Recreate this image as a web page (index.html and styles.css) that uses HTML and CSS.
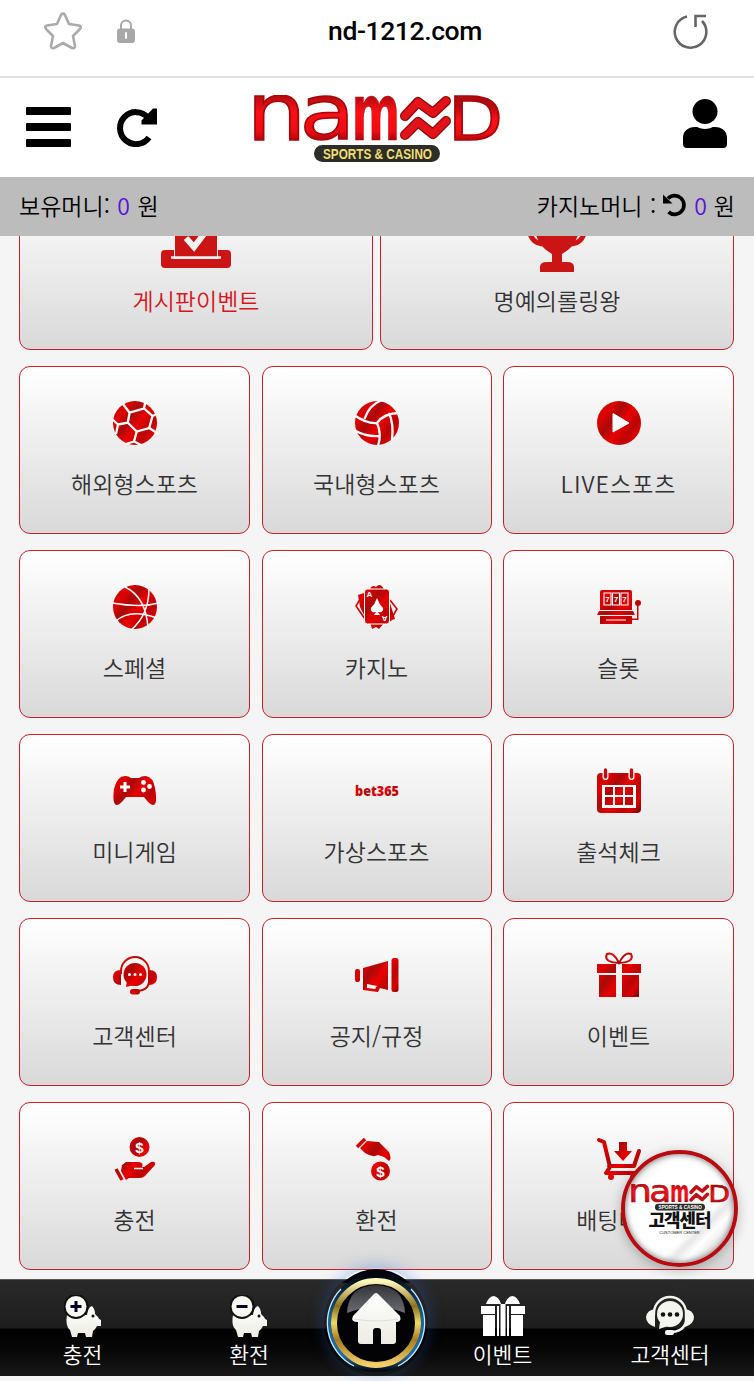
FILE: index.html
```html
<!DOCTYPE html>
<html lang="ko">
<head>
  <meta charset="UTF-8">
  <meta name="viewport" content="width=device-width, initial-scale=1">
  <title>NAMND</title>
  <link rel="stylesheet" href="styles.css">
</head>
<body>
  <!-- shared gradients -->
  <svg class="defs" width="0" height="0">
    <defs>
      <linearGradient id="red" gradientUnits="userSpaceOnUse" x1="0" y1="6" x2="44" y2="38">
        <stop offset="0" stop-color="#c00808"/>
        <stop offset=".2" stop-color="#e00000"/>
        <stop offset=".37" stop-color="#a80a0a"/>
        <stop offset=".55" stop-color="#ea0000"/>
        <stop offset=".75" stop-color="#ba0505"/>
        <stop offset=".88" stop-color="#dc0000"/>
        <stop offset="1" stop-color="#8c0808"/>
      </linearGradient>
      <linearGradient id="logoRed" x1="0" y1="0" x2="0" y2="1">
        <stop offset=".3" stop-color="#b00a10"/>
        <stop offset=".5" stop-color="#fb1016"/>
        <stop offset=".7" stop-color="#ee0c12"/>
        <stop offset=".85" stop-color="#8d0509"/>
      </linearGradient>
      <linearGradient id="gold" x1="0" y1="0" x2="0" y2="1">
        <stop offset="0" stop-color="#fff8bd"/>
        <stop offset=".3" stop-color="#8c7319"/>
        <stop offset=".5" stop-color="#f0d968"/>
        <stop offset=".7" stop-color="#a47c22"/>
        <stop offset="1" stop-color="#f5cf68"/>
      </linearGradient>
      <linearGradient id="blue" x1="0" y1="0" x2="0" y2="1">
        <stop offset="0" stop-color="#02070f"/>
        <stop offset=".45" stop-color="#15629f"/>
        <stop offset=".85" stop-color="#1c6fb0"/>
        <stop offset="1" stop-color="#020c18"/>
      </linearGradient>
      <linearGradient id="shine" x1="0" y1="0" x2="0" y2="1">
        <stop offset="0" stop-color="#34343b"/>
        <stop offset="1" stop-color="#6c6c73"/>
      </linearGradient>
      <linearGradient id="cream" x1="0" y1="0" x2="0" y2="1">
        <stop offset="0" stop-color="#fff"/>
        <stop offset="1" stop-color="#ecece3"/>
      </linearGradient>
    </defs>
  </svg>

  <div class="browser-bar">
    <svg class="star" viewBox="0 0 40 40" width="40" height="40"><path d="M20 3Q21 2 22 4L26 13 36 14.500Q39 15.500 37 18L30 25 32 35Q32 38 29 37L20 32 11 37Q8 38 8 35L10 25 3 18Q1 15.500 4 14.500L14 13 18 4Q19 2 20 3Z" fill="none" stroke="#ababab" stroke-width="2.600" stroke-linejoin="round"/></svg>
    <svg class="lock" viewBox="0 0 20 26" width="20" height="26"><path d="M5 12V7.500a5 5 0 0 1 10 0V12" fill="none" stroke="#a8a8a8" stroke-width="2"/><rect x="1" y="10.500" width="18" height="14.500" rx="3" fill="#a8a8a8"/><path d="M10 15v5" stroke="#fff" stroke-width="2.200" stroke-linecap="round"/></svg>
    <div class="url">nd-1212.com</div>
    <svg class="reload" viewBox="0 0 38 38" width="38" height="38"><path d="M16 4.500A15.800 15.800 0 1 0 31 9M24.500 15V4H35" fill="none" stroke="#666" stroke-width="2.600"/></svg>
  </div>

  <header class="header">
    <div class="menu"><span></span><span></span><span></span></div>
    <svg class="refresh" viewBox="0 0 40 40" width="40" height="40"><path d="M32 30.500A16 16 0 1 1 31 10.500" fill="none" stroke="#000" stroke-width="6"/><path d="M40 1.500V17.500H24.500V13.500L36 1.500Z"/></svg>
    <svg class="logo" viewBox="0 0 246 68" width="246" height="68">
      <g class="logo-word">
        <text font-size="80" transform="translate(-7.500 45) scale(1.180 1)">n</text>
        <text font-size="77" transform="translate(45.500 44.400) scale(1.180 1)">a</text>
        <text class="m" font-size="78" transform="translate(97.500 45) scale(.6 1)">m</text>
        <text font-size="60" transform="translate(194 45) scale(1.190 1)">D</text>
      </g>
      <g class="waves">
        <path d="M151 21 164 7 179 18 192 6M151 40 164 27 179 39 192 26" stroke="#8f0609" stroke-width="10"/>
        <path d="M151 21 164 7 179 18 192 6M151 40 164 27 179 39 192 26" stroke="#e21318" stroke-width="7.500"/>
      </g>
      <rect x="60" y="50" width="126" height="17" rx="8.500" fill="#2d2d2a"/>
      <text class="logo-sub" x="69" y="63.500" textLength="109" lengthAdjust="spacingAndGlyphs">SPORTS &amp; CASINO</text>
    </svg>
    <svg class="user" viewBox="0 0 44 50" width="44" height="50"><circle cx="22" cy="12.500" r="12.500"/><path d="M0 45V39C0 32 5 28 12 28h2q8 4 16 0h2c7 0 12 4 12 11v6q0 4-4 4H4q-4 0-4-4Z"/></svg>
  </header>

  <div class="money-bar">
    <div>보유머니: <b>0</b> 원</div>
    <div class="casino">카지노머니 :
      <svg viewBox="0 0 24 24" width="24" height="24"><path d="M5 5.500A9.300 9.300 0 1 1 5.500 19" fill="none" stroke="#000" stroke-width="3.700"/><path d="M0 1.500 9.500 10.500H0Z"/></svg>
      <b>0</b> 원</div>
  </div>

  <main class="main">
    <div class="top-row">
      <a class="card big active">
        <svg viewBox="0 0 70 70" width="70" height="70"><path d="M14 15h42v44H14z"/><path d="m25 40 8 9 13-17" fill="none" stroke="#f2f2f2" stroke-width="6"/><path d="M4 52h9v9h44v-9h9q4 0 4 4v10q0 4-4 4H4q-4 0-4-4V56q0-4 4-4Z"/><path d="M10 59.500h50" stroke="#f2f2f2" stroke-width="2.500"/></svg>
        <span>게시판이벤트</span>
      </a>
      <a class="card big">
        <svg viewBox="0 0 70 74" width="70" height="74"><path d="M14 8h42v28Q54 48 40 56v8h5q7 0 7 5v5H18v-5q0-5 7-5h5v-8Q16 48 14 36Z"/><path d="M15 17H7v14q2 14 13 15M55 17h8v14q-2 14-13 15" fill="none" stroke="#cb1515" stroke-width="5"/></svg>
        <span>명예의롤링왕</span>
      </a>
    </div>

    <div class="grid">
      <a class="card">
        <svg viewBox="0 0 44 44"><circle cx="22" cy="22" r="22"/><path class="line" d="M16.600 11.700 31 7.500 39.500 15 36.200 27 23.700 30.500 14.800 21.700ZM16.600 11.700 10 3M31 7.500 32.500 0M39.500 15 44 13M36.200 27 44 32M23.700 30.500 21 40.500M14.800 21.700 5 23.500M5 23.500-1 18M5 23.500 3 33M21 40.500 13 43M21 40.500 28 44"/></svg>
        <span>해외형스포츠</span>
      </a>
      <a class="card">
        <svg viewBox="0 0 44 44"><circle cx="22" cy="22" r="22"/><path class="line" d="M-1 14Q12 23 22 22 29 12 45 12M22 22Q27 33 23 45M-1 29Q11 36 24 35M27-1Q14 4 9.500 18M34 12Q39 23 37 39"/></svg>
        <span>국내형스포츠</span>
      </a>
      <a class="card">
        <svg viewBox="0 0 44 44"><circle cx="22" cy="22" r="22"/><path d="M16 12.500V31L32 22Z" fill="#fff" stroke="#fff" stroke-linejoin="round"/></svg>
        <span class="live">LIVE스포츠</span>
      </a>

      <a class="card">
        <svg viewBox="0 0 44 44"><circle cx="22" cy="22" r="22"/><path class="line thin" d="M12 2Q33 12 35 43M36 3Q36 30 18 45M-1 18Q29 23 45 18M3 36Q17 23 44 33"/></svg>
        <span>스페셜</span>
      </a>
      <a class="card">
        <svg viewBox="0 0 44 44"><path d="M15 4q2-5 6-2 4-5 8 2v4H15ZM15 37h15l-6 7-3-2-4 2Z"/><path d="M7 11 1 21l9 13M35 15l7 9-7 12" fill="none" stroke="url(#red)" stroke-width="1.600"/><path d="M3 10 9 8v22L5 22ZM34 15l6 19-6 2Z"/><rect x="9.500" y="4" width="25" height="35" rx="3" stroke="#fff"/><path d="M22 13q2 6 6 10 1 5-5 4l2 3h-6l2-3q-6 1-5-4 4-4 6-10Z" fill="#fff"/><text class="pip" x="11.500" y="12">A</text><text class="pip" x="-32.500" y="-31" transform="rotate(180)">A</text></svg>
        <span>카지노</span>
      </a>
      <a class="card">
        <svg viewBox="0 0 44 44"><path d="M5 5h28q2 0 2 2v18H3V7q0-2 2-2ZM2 26h34l2 4H0ZM3 31h32v8H3ZM40 16h1.500v19H35v-1.500h5Z"/><circle cx="41" cy="18" r="3"/><path d="M7 8h7v12H7ZM15.500 8h7v12h-7ZM24 8h7v12h-7ZM9 35h20" fill="none" stroke="#fff" stroke-width="1.100"/><text class="seven" x="8.200" y="17.300">7</text><text class="seven" x="16.700" y="17.300">7</text><text class="seven" x="25.200" y="17.300">7</text></svg>
        <span>슬롯</span>
      </a>

      <a class="card">
        <svg viewBox="0 0 44 44"><path d="M12 7q4 0 6 2h8q2-2 7-2 7 1 9 12 3 17-2 17-3 0-9-8H13Q7 36 4 36-1 36 1 20 4 7 12 7Z"/><path d="M12 13v10M7 18h10" stroke="#fff" stroke-width="3"/><g fill="#fff"><circle cx="30.500" cy="13.500" r="2.400"/><circle cx="30.500" cy="21" r="2.400"/><circle cx="36.500" cy="17.500" r="2.400"/></g></svg>
        <span>미니게임</span>
      </a>
      <a class="card">
        <svg viewBox="0 0 44 44"><text class="bet" x="0" y="27" textLength="44" lengthAdjust="spacingAndGlyphs">bet365</text></svg>
        <span>가상스포츠</span>
      </a>
      <a class="card">
        <svg viewBox="0 0 44 44"><path d="M4 4h36q4 0 4 4v32q0 4-4 4H4q-4 0-4-4V8q0-4 4-4Z"/><path d="M8.500 3v5M34.500 3v5" stroke="#fff" stroke-width="6" stroke-linecap="round"/><path d="M8.500 1v7M34.500 1v7" stroke="#c60b0b" stroke-width="3.400" stroke-linecap="round"/><path d="M5 16h34v23H5Z" fill="#fff"/><path d="M8 18h8v8H8ZM18 18h8v8h-8ZM28 18h8v8h-8ZM8 28h8v8H8ZM18 28h8v8h-8ZM28 28h8v8h-8Z"/></svg>
        <span>출석체크</span>
      </a>

      <a class="card">
        <svg viewBox="0 0 44 44"><path d="M8 21v-3a14 14 0 0 1 28 0v11q-1 9-13 9" fill="none" stroke="url(#red)" stroke-width="2"/><path d="M8 17v15Q0 32 0 24q0-7 8-7ZM36 17v15q8 0 8-8 0-7-8-7Z"/><circle cx="22" cy="21.500" r="11.500"/><path d="m14 28-1 6 8-2Z"/><rect x="17" y="36" width="10" height="5.500" rx="2.700"/><g fill="#fff"><circle cx="16.500" cy="21.500" r="1.500"/><circle cx="22" cy="21.500" r="1.500"/><circle cx="27.500" cy="21.500" r="1.500"/></g></svg>
        <span>고객센터</span>
      </a>
      <a class="card">
        <svg viewBox="0 0 44 44"><rect x="0" y="16" width="5" height="13" rx="2"/><path d="M8 15 33 8v29l-8-2-2 4-15-2Z"/><path d="M12 31v4l8 1 2-3Z" fill="#f4f4f4"/><rect x="36.500" y="5" width="7" height="34" rx="2.500"/></svg>
        <span>공지/규정</span>
      </a>
      <a class="card">
        <svg viewBox="0 0 44 44"><path d="M22 10Q16-2 10 1 6 9 22 10 38 9 34 1 28-2 22 10Z" fill="none" stroke="url(#red)" stroke-width="2"/><path d="M0 11h19v9H0ZM25 11h19v9H25ZM2 22h17v22H2ZM25 22h17v22H25Z"/></svg>
        <span>이벤트</span>
      </a>

      <a class="card">
        <svg viewBox="0 0 44 44"><circle cx="26.500" cy="10" r="10"/><text class="coin" x="22.300" y="15.500">$</text><path d="m9 28 4-3h13q5 1 3 5h-8 10l7-5q5-1 4 3l-10 11q-2 2-5 2H16l-3 2-5-9Z"/><path d="M21 31.500h9" stroke="#f2f2f2" stroke-width="1.500"/><path d="m3 32 6 11" stroke="url(#red)" stroke-width="3.500"/></svg>
        <span>충전</span>
      </a>
      <a class="card">
        <svg viewBox="0 0 44 44"><circle cx="25.500" cy="34" r="9.500"/><text class="coin" x="21.300" y="39.500">$</text><path d="m12 4 12 1 10 10q3 7 0 9l-5-4-6-2q-5 3-13-2l-5-5Z"/><path d="M2 10 10 2" stroke="url(#red)" stroke-width="3.500"/></svg>
        <span>환전</span>
      </a>
      <a class="card">
        <svg viewBox="0 0 44 44"><path d="m2 3 5 2 6 25-4 6h31M12 29h25l5-15" fill="none" stroke="url(#red)" stroke-width="4" stroke-linejoin="round" stroke-linecap="round"/><path d="M22 5h8v9h5l-9 10-9-10h5Z"/><circle cx="14" cy="40" r="3"/><circle cx="36" cy="40" r="3"/></svg>
        <span>배팅내역</span>
      </a>
    </div>
  </main>

  <nav class="nav">
    <a>
      <svg viewBox="0 0 38 42" width="38" height="42"><path d="M3 20H23q1-8 5-9 3 3 3 8l3 3q1 3 3 3v6h-4q-2 4-4 5l-1 6h-6l-1-4h-7l-1 4H8L6 35Q1 31 3 20Z" fill="url(#cream)"/><circle cx="29" cy="21" r="1.500" fill="#111"/><circle cx="12" cy="11.500" r="12.500" fill="#111"/><circle cx="12" cy="11.500" r="10.500" fill="#f8f8f3"/><path d="M12 6v11M6.500 11.500h11" stroke="#080524" stroke-width="3"/></svg>
      <span>충전</span>
    </a>
    <a>
      <svg viewBox="0 0 38 42" width="38" height="42"><path d="M3 20H23q1-8 5-9 3 3 3 8l3 3q1 3 3 3v6h-4q-2 4-4 5l-1 6h-6l-1-4h-7l-1 4H8L6 35Q1 31 3 20Z" fill="url(#cream)"/><circle cx="29" cy="21" r="1.500" fill="#111"/><circle cx="12" cy="11.500" r="12.500" fill="#111"/><circle cx="12" cy="11.500" r="10.500" fill="#f8f8f3"/><path d="M6.500 11.500h11" stroke="#080524" stroke-width="3"/></svg>
      <span>환전</span>
    </a>
    <a class="home">
      <svg viewBox="0 0 104 108" width="104" height="108"><path d="M18 15Q52-13 86 15Z" fill="#02060c"/><circle cx="52" cy="55" r="49" fill="#020910"/><circle cx="52" cy="55" r="47" fill="none" stroke="url(#blue)" stroke-width="4"/><path d="M17 21A48.500 48.500 0 0 0 30 98M87 21A48.500 48.500 0 0 1 74 98" fill="none" stroke="#c9e8ff" stroke-width="1.300"/><circle cx="52" cy="55" r="42" fill="#030305" stroke="url(#gold)" stroke-width="6"/><path d="M23 45Q24 18 52 17q28 1 29 28-29-12-58 0Z" fill="url(#shine)"/><path d="M50 26q2-2 4 0L76 48q2 6-4 6v19q0 3-3 3H57V63q0-3-3-3h-2q-3 0-3 3v13H37q-3 0-3-3V54q-8 0-5-6Z" fill="url(#cream)"/><path d="M30 51q22 4 44 0" fill="none" stroke="#ddd"/></svg>
    </a>
    <a>
      <svg viewBox="0 0 44 42" width="44" height="42" fill="#fff"><path d="M20 9H5q3-8 8-8 5 1 7 8ZM24 9h15q-3-8-8-8-5 1-7 8Z"/><path d="M0 11h14v8H0ZM30 11h14v8H30ZM2 20h12v21H2ZM30 20h12v21H30ZM16 11h2v30h-2ZM19.500 9h5v32h-5ZM26 11h2v30h-2Z"/></svg>
      <span>이벤트</span>
    </a>
    <a>
      <svg viewBox="0 0 48 42" width="48" height="42" fill="#f5f5ef"><path d="M8 20v-2a16 16 0 0 1 32 0v8q-2 11-16 11" fill="none" stroke="#f5f5ef" stroke-width="2.400"/><path d="M9 14v18Q0 29 0 22q1-7 9-8ZM39 14v18q9-3 9-10-1-7-9-8Z"/><circle cx="24" cy="19" r="13"/><path d="m14 27-1 7 9-3Z"/><rect x="19" y="35" width="9" height="5" rx="2"/><g fill="#111"><circle cx="17" cy="19.500" r="2.300"/><circle cx="24" cy="19.500" r="2.300"/><circle cx="31" cy="19.500" r="2.300"/></g></svg>
      <span>고객센터</span>
    </a>
  </nav>

  <a class="float-badge">
    <svg viewBox="0 0 246 68" width="98" height="27">
      <g class="logo-word">
        <text font-size="80" transform="translate(-7.500 45) scale(1.180 1)">n</text>
        <text font-size="77" transform="translate(45.500 44.400) scale(1.180 1)">a</text>
        <text class="m" font-size="78" transform="translate(97.500 45) scale(.6 1)">m</text>
        <text font-size="60" transform="translate(194 45) scale(1.190 1)">D</text>
      </g>
      <g class="waves">
        <path d="M151 21 164 7 179 18 192 6M151 40 164 27 179 39 192 26" stroke="#c01216" stroke-width="9"/>
      </g>
      <rect x="60" y="50" width="126" height="17" rx="8.500" fill="#2d2d2a"/>
      <text class="logo-sub white" x="69" y="63.500" textLength="109" lengthAdjust="spacingAndGlyphs">SPORTS &amp; CASINO</text>
    </svg>
    <strong>고객센터</strong>
    <small>CUSTOMER CENTER</small>
  </a>
</body>
</html>
```
FILE: styles.css
```css
* {
  box-sizing: border-box;
}

body {
  margin: 0;
  height: 1381px;
  position: relative;
  display: flex;
  flex-direction: column;
  background: #f5f5f5;
  color: #333;
  font-family: 'Noto Sans CJK KR', sans-serif;
  font-weight: 350;
  overflow: hidden;
}

svg {
  display: block;
  flex: none;
}

.defs {
  position: absolute;
}

/* browser bar */
.browser-bar {
  height: 78px;
  flex: none;
  display: flex;
  align-items: center;
  padding: 0 45px 14px 43px;
  background: #fff;
  border-bottom: 2px solid #e3e3e3;
}

.lock {
  margin-left: 33px;
}

.url {
  flex: 1;
  text-align: center;
  padding-left: 3px;
  color: #000;
  font: 500 26.5px/36px Roboto, sans-serif;
  letter-spacing: -0.4px;
}

/* header */
.header {
  height: 99px;
  flex: none;
  display: flex;
  align-items: center;
  padding: 0 27px 0 26px;
  background: #fff;
}

.menu {
  width: 45px;
  height: 40px;
  margin-top: -2px;
  display: flex;
  flex-direction: column;
  justify-content: space-between;
}

.menu span {
  height: 8px;
  border-radius: 1px;
  background: #000;
}

.refresh {
  margin: -2px 0 0 46px;
}

.logo {
  margin: 2px 0 0 97px;
}

.user {
  margin: -8px 0 0 auto;
}

.logo-word text {
  font-family: 'DejaVu Sans', sans-serif;
  font-weight: 400;
  fill: url(#logoRed);
  stroke: #a5070b;
  stroke-width: 1.5px;
}

.logo-word .m {
  font-weight: 700;
  stroke-width: 0.5px;
}

.waves path {
  fill: none;
  stroke-linecap: round;
  stroke-linejoin: round;
}

.logo-sub {
  font: 700 14px 'Liberation Sans', sans-serif;
  fill: #efdf72;
}

.logo-sub.white {
  fill: #fff;
}

/* money */
.money-bar {
  height: 59px;
  flex: none;
  display: flex;
  justify-content: space-between;
  align-items: center;
  padding: 0 19px 4px;
  background: #bcbcbc;
  color: #000;
  font-size: 23px;
  line-height: 54px;
  word-spacing: 1px;
}

.money-bar b {
  color: #5b12d6;
  font-weight: 350;
}

.casino {
  display: flex;
  align-items: center;
  gap: 7px;
}

/* cards */
.main {
  height: 1043px;
  flex: none;
  padding: 0 20px 0 19px;
  overflow: hidden;
}

.top-row {
  display: flex;
  gap: 7px;
  margin: -54px 0 16px;
}

.grid {
  display: grid;
  grid-template-columns: 231px 230px 231px;
  justify-content: space-between;
  row-gap: 16px;
}

.card {
  height: 168px;
  padding-top: 34px;
  display: flex;
  flex-direction: column;
  align-items: center;
  border: 1.5px solid #c92027;
  border-radius: 11px;
  background: linear-gradient(#fff, #d9d9d9);
  font-size: 23px;
  line-height: 34px;
}

.card svg {
  fill: url(#red);
  overflow: visible;
}

.grid .card svg {
  width: 44px;
  height: 44px;
}

.card span {
  margin-top: 21px;
}

.card .live {
  letter-spacing: 1px;
}

.card.big {
  flex: 1;
  padding-top: 15px;
}

.card.big svg {
  fill: #cb1515;
  margin-bottom: -4px;
}

.card.big.active svg {
  margin-bottom: 0;
}

.card.big span {
  margin-top: 15px;
}

.card.active {
  color: #d9151b;
}

.card .line {
  fill: none;
  stroke: #fff;
  stroke-width: 2.3px;
}

.card .thin {
  stroke-width: 1.5px;
}

.pip,
.seven {
  font: 700 8px 'Liberation Sans', sans-serif;
  fill: #fff;
}

.coin {
  font: 700 15px 'Liberation Sans', sans-serif;
  fill: #fff;
}

.bet {
  font: 800 14px 'Open Sans', sans-serif;
}

/* bottom navigation */
.nav {
  height: 97px;
  flex: none;
  display: grid;
  grid-template-columns: 165px 168px 85px 169px 166px;
  background: linear-gradient(#2a2a2a, #1d1d1d 50%, #000 51%, #080808 75%, #181818);
  border-top: 1px solid #555;
  color: #fff;
  font-size: 21.5px;
  line-height: 32px;
}

.nav a {
  display: flex;
  flex-direction: column;
  align-items: center;
  padding-top: 15px;
}

.nav span {
  margin-top: 1px;
}

.nav .home {
  padding: 0;
}

.home svg {
  margin: -12px -10px 0;
  border-radius: 50%;
  box-shadow: 0 -2px 16px rgba(50, 105, 220, 0.35);
}

/* floating customer center button */
.float-badge {
  position: absolute;
  right: 16px;
  top: 1150px;
  width: 117px;
  height: 117px;
  padding-top: 30px;
  display: flex;
  flex-direction: column;
  align-items: center;
  border: 4px solid #b70b12;
  border-radius: 50%;
  background: linear-gradient(135deg, #eee 10%, #fff 25%, #fff 65%, #e8e8e8 70%, #fff 76%, #eee 82%, #fff 88%);
  box-shadow: 0 3px 12px rgba(0, 0, 0, 0.25), inset 0 0 6px rgba(0, 0, 0, 0.6);
  color: #111;
}

.float-badge strong {
  font-size: 18px;
  font-weight: 900;
  line-height: 17px;
  letter-spacing: -1px;
}

.float-badge small {
  margin-top: 2px;
  font: 4px/5px 'Liberation Sans', sans-serif;
}
```
